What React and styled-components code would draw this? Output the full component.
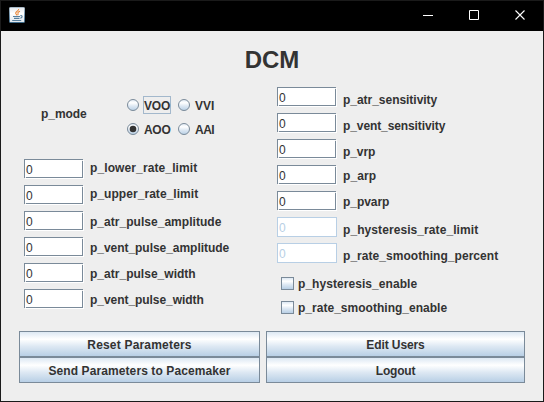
import React from 'react';
import styled, { createGlobalStyle, css } from 'styled-components';

const GlobalStyle = createGlobalStyle`
  * { box-sizing: border-box; }
  body { margin: 0; background: #eee; }
`;

const metalGradient = css`
  background: linear-gradient(#dde8f3 0%, #fff 30%, #dde8f3 60%, #b8cfe5 100%);
`;

const Window = styled.div`
  width: 544px;
  height: 402px;
  overflow: hidden;
  display: flex;
  flex-direction: column;
  background: #eee;
  border: 1px solid #1a1a1a;
  color: #333;
  font: bold 12px/14px "Liberation Sans", Arial, sans-serif;
  white-space: nowrap;
`;

const TitleBar = styled.header`
  display: flex;
  justify-content: space-between;
  height: 30px;
  flex: none;
  padding: 6px 0 0 8px;
  background: #000;
`;

const WindowControls = styled.div`
  display: flex;
  gap: 34px;
  padding: 3px 16px 0 0;
  svg { display: block; width: 12px; height: 12px; }
`;

const Title = styled.h1`
  margin: 0;
  height: 56px;
  flex: none;
  padding-top: 15px;
  font-size: 24px;
  line-height: 28px;
  text-align: center;
`;

const Columns = styled.main`
  display: grid;
  grid-template-columns: 253px 1fr;
  height: 244px;
  flex: none;
  padding-left: 23px;
`;

const Column = styled.section`
  display: flex;
  flex-direction: column;
`;

const Text = styled.span`
  letter-spacing: ${(p) => p.$spacing || 0}px;
`;

const ModeGroup = styled.div`
  display: flex;
  height: 72px;
  padding: 9px 0 0 17px;
`;

const ModeLabel = styled(Text)`
  width: 86px;
  padding-top: 11px;
`;

const RadioGrid = styled.div`
  display: grid;
  grid-template-columns: 51px 44px;
  grid-template-rows: 18px 18px;
  row-gap: 6px;
`;

const RadioOption = styled.label`
  display: flex;
  align-items: center;
  gap: 4px;
  svg { display: block; flex: none; }
`;

const RadioText = styled.span`
  height: 18px;
  border: 1px solid ${(p) => (p.$focused ? '#a3b8cc' : 'transparent')};
  padding: 2px 0 0;
  width: 28px;
  letter-spacing: ${(p) => p.$spacing || 0}px;
`;

const FieldRow = styled.label`
  display: flex;
  height: 26px;
  gap: 6px;
`;

const FieldLabel = styled(Text)`
  padding-top: ${(p) => p.$base - 11}px;
`;

const FieldBox = styled.span`
  position: relative;
  width: 60px;
  height: 20px;
  flex: none;
  padding: 3px 0 0 1px;
  border: 1px solid #b8cfe5;
  background: #fff;
  color: #b8cfe5;
  font-weight: normal;
  ${(p) => !p.$disabled && css`
    width: 59px;
    height: 19px;
    margin-right: 1px;
    border-color: #7a8a99;
    box-shadow: 1px 1px 0 #fff;
    color: #333;
    &::before, &::after {
      content: '';
      position: absolute;
      width: 1px;
      height: 1px;
      background: #eee;
    }
    &::before { left: 0; bottom: -1px; }
    &::after { right: -1px; top: 0; }
  `}
`;

const CheckRow = styled.label`
  display: flex;
  height: 24px;
  padding-left: 4px;
  gap: 4px;
`;

const CheckList = styled.div`
  padding-top: 8px;
`;

const CheckBox = styled.span`
  width: 13px;
  height: 13px;
  border: 1px solid #7a8a99;
  ${metalGradient}
`;

const Actions = styled.footer`
  display: grid;
  grid-template-columns: 241px 259px;
  grid-template-rows: 26px 26px;
  column-gap: 6px;
  padding-left: 18px;
`;

const Button = styled.button`
  border: 1px solid #7a8a99;
  padding: 2px 0 0;
  color: inherit;
  font: inherit;
  letter-spacing: ${(p) => p.$spacing || 0}px;
  ${metalGradient}
`;

const leftFields = [
  ['p_lower_rate_limit', 13, 0.11],
  ['p_upper_rate_limit', 13, 0.05],
  ['p_atr_pulse_amplitude', 15, 0.03],
  ['p_vent_pulse_amplitude', 15, -0.04],
  ['p_atr_pulse_width', 15, 0.02],
  ['p_vent_pulse_width', 15, -0.05],
];

const rightFields = [
  ['p_atr_sensitivity', 17, -0.03],
  ['p_vent_sensitivity', 17, -0.1],
  ['p_vrp', 17, -0.1],
  ['p_arp', 15, 0.1],
  ['p_pvarp', 15, -0.05],
  ['p_hysteresis_rate_limit', 17, 0.08, true],
  ['p_rate_smoothing_percent', 17, 0.05, true],
];

const Field = ({ name, base, spacing, disabled }) => (
  <FieldRow>
    <FieldBox $disabled={disabled}>0</FieldBox>
    <FieldLabel $base={base} $spacing={spacing}>{name}</FieldLabel>
  </FieldRow>
);

const Radio = ({ name, checked, focused, spacing }) => (
  <RadioOption>
    <svg width="12" height="12" viewBox="0 0 12 12">
      <circle cx="6" cy="6" r="5.5" fill="url(#metal)" stroke="#7a8a99" />
      {checked && <circle cx="6" cy="6" r="3.3" fill="#333" />}
    </svg>
    <RadioText $focused={focused} $spacing={spacing}>{name}</RadioText>
  </RadioOption>
);

const JavaIcon = () => (
  <svg width="16" height="16" viewBox="0 0 16 16" fill="none">
    <defs>
      <linearGradient id="tile" x2="0" y2="1">
        <stop stopColor="#e4e8ec" />
        <stop offset=".4" stopColor="#fff" />
        <stop offset="1" stopColor="#dfe6ec" />
      </linearGradient>
      <linearGradient id="edge" x2="0" y2="1">
        <stop stopColor="#a9bac8" />
        <stop offset="1" stopColor="#3f6c8c" />
      </linearGradient>
      <linearGradient id="metal" x2="0" y2="1">
        <stop stopColor="#dde8f3" />
        <stop offset=".3" stopColor="#fff" />
        <stop offset=".6" stopColor="#dde8f3" />
        <stop offset="1" stopColor="#b8cfe5" />
      </linearGradient>
    </defs>
    <rect x=".5" y=".5" width="15" height="15" rx=".7" fill="url(#tile)" stroke="url(#edge)" />
    <path d="M9.7 2c.4 1.7-3.2 2.5-3 4.2.1.8 1 1.3 1.1 2.2M11 4.2c-1.4.5-2.4 1.2-2 2.1.3.6.4 1-.4 1.8" stroke="#e98332" strokeWidth="1.1" />
    <path d="M4 9.5h7M5 11.4h5.5M3.2 13.5h9M11.3 8.7c2.3-.7 2.5 1.8 0 2.5" stroke="#587f9d" strokeWidth="1.1" />
  </svg>
);

export default function App() {
  return (
    <Window>
      <GlobalStyle />
      <TitleBar>
        <JavaIcon />
        <WindowControls>
          <svg viewBox="0 0 12 12"><path d="M0 5.5h10" stroke="#fff" /></svg>
          <svg viewBox="0 0 12 12"><path d="M.5.5h9v9h-9z" fill="none" stroke="#fff" /></svg>
          <svg viewBox="0 0 12 12"><path d="M.5.5l9 9M9.5.5l-9 9" stroke="#fff" strokeWidth="1.1" /></svg>
        </WindowControls>
      </TitleBar>
      <Title>DCM</Title>
      <Columns>
        <Column>
          <ModeGroup>
            <ModeLabel $spacing={-0.05}>p_mode</ModeLabel>
            <RadioGrid>
              <Radio name="VOO" focused spacing={-0.2} />
              <Radio name="VVI" />
              <Radio name="AOO" checked spacing={-0.3} />
              <Radio name="AAI" spacing={-0.5} />
            </RadioGrid>
          </ModeGroup>
          {leftFields.map(([name, base, spacing]) => (
            <Field key={name} name={name} base={base} spacing={spacing} />
          ))}
        </Column>
        <Column>
          {rightFields.map(([name, base, spacing, disabled]) => (
            <Field key={name} name={name} base={base} spacing={spacing} disabled={disabled} />
          ))}
          <CheckList>
            <CheckRow><CheckBox /><Text $spacing={0.06}>p_hysteresis_enable</Text></CheckRow>
            <CheckRow><CheckBox /><Text $spacing={0.02}>p_rate_smoothing_enable</Text></CheckRow>
          </CheckList>
        </Column>
      </Columns>
      <Actions>
        <Button $spacing={0.19}>Reset Parameters</Button>
        <Button $spacing={-0.1}>Edit Users</Button>
        <Button $spacing={0.1}>Send Parameters to Pacemaker</Button>
        <Button $spacing={-0.2}>Logout</Button>
      </Actions>
    </Window>
  );
}
